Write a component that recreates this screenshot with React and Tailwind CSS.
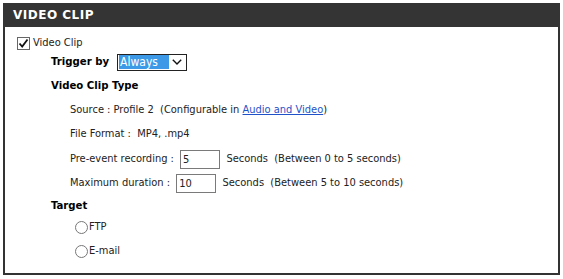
export default function App() {
  const text = "font-['DejaVu_Sans_Condensed','DejaVu_Sans',sans-serif] text-[11px] text-[#222]";
  const bold = "font-bold text-[11.3px] text-black";
  return (
    <div className="w-[563px] h-[279px] bg-white pt-[3px] pl-[3px]">
      <div className="w-[557px] h-[272px] border-2 border-[#333] border-t-0 flex flex-col">
        <div className="h-[24px] bg-[#343434] flex items-center pl-[10px] -mx-[2px]">
          <span className="font-['DejaVu_Sans',sans-serif] font-bold text-[12px] tracking-[0.5px] text-white">
            VIDEO CLIP
          </span>
        </div>
        <div className={`${text} flex flex-col`}>
          <label className="flex items-center h-[20px] mt-[6px] pl-[12px] gap-[3px]">
            <span className="w-[13px] h-[13px] border border-[#666] bg-white flex items-center justify-center">
              <svg width="11" height="11" viewBox="0 0 11 11">
                <path d="M1.5 5.5 L4.2 8.5 L9.5 1.5" fill="none" stroke="#111" strokeWidth="1.8" />
              </svg>
            </span>
            <span>Video Clip</span>
          </label>
          <div className="flex items-center h-[18px] pl-[46px] gap-[8px]">
            <span className={bold}>Trigger by</span>
            <div className="w-[70px] h-[17px] border border-[#222] flex items-center px-[1px]">
              <span className="bg-[#3c99e8] text-white h-[14px] w-[50px] flex items-center pl-[1px] text-[12px]">Always</span>
              <svg className="ml-auto mr-[3px]" width="10" height="6" viewBox="0 0 10 6">
                <path d="M0.8 0.8 L5 5 L9.2 0.8" fill="none" stroke="#111" strokeWidth="1.4" />
              </svg>
            </div>
          </div>
          <div className="flex items-center h-[24px] mt-[3px] pl-[46px]">
            <span className={bold}>Video Clip Type</span>
          </div>
          <div className="flex items-center h-[24px] pl-[65px] whitespace-pre">
            <span>Source : Profile 2  (Configurable in </span>
            <a href="#" className="text-[#1f52c8] underline">Audio and Video</a>
            <span>)</span>
          </div>
          <div className="flex items-center h-[24px] pl-[65px] whitespace-pre">
            <span>File Format :  MP4, .mp4</span>
          </div>
          <div className="flex items-center h-[24px] mt-[1px] pl-[65px] whitespace-pre">
            <span>Pre-event recording : </span>
            <input defaultValue="5" className="ml-[3px] w-[40px] h-[19px] border border-[#7a7a7a] px-[2px] outline-none" />
            <span>  Seconds  (Between 0 to 5 seconds)</span>
          </div>
          <div className="flex items-center h-[24px] pl-[65px] whitespace-pre">
            <span>Maximum duration : </span>
            <input defaultValue="10" className="ml-[3px] w-[40px] h-[19px] border border-[#7a7a7a] px-[2px] outline-none" />
            <span>  Seconds  (Between 5 to 10 seconds)</span>
          </div>
          <div className="flex items-center h-[22px] pl-[46px]">
            <span className={bold}>Target</span>
          </div>
          <label className="flex items-center h-[20px] pl-[70px] gap-[1px]">
            <span className="w-[13px] h-[13px] rounded-full border border-[#777] bg-white" />
            <span>FTP</span>
          </label>
          <label className="flex items-center h-[24px] mt-[2px] pl-[70px] gap-[1px]">
            <span className="w-[13px] h-[13px] rounded-full border border-[#777] bg-white" />
            <span>E-mail</span>
          </label>
        </div>
      </div>
    </div>
  );
}
